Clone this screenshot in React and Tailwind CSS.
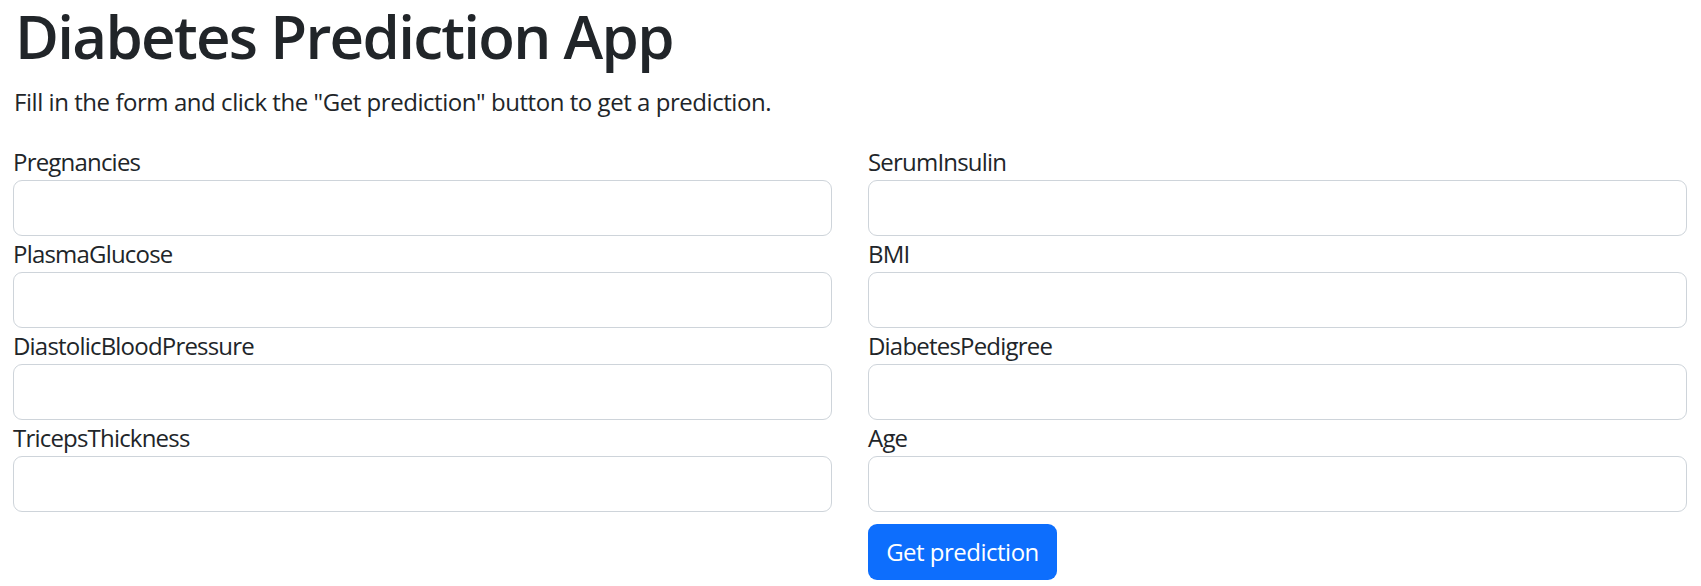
import React from 'react';

const leftFields = ['Pregnancies', 'PlasmaGlucose', 'DiastolicBloodPressure', 'TricepsThickness'];
const rightFields = ['SerumInsulin', 'BMI', 'DiabetesPedigree', 'Age'];

const Field = ({ name }) => (
    <div>
        <label htmlFor={name} className="block text-[24px] leading-[36px] tracking-[-0.8px]">{name}</label>
        <input
            id={name}
            type="text"
            className="block w-full h-[56px] px-[18px] bg-white border border-[#ced4da] rounded-[9px] outline-none"
        />
    </div>
);

const App = () => {
    return (
        <div className="min-h-screen bg-white text-[#212529] font-['Open_Sans','Noto_Sans',sans-serif] pl-[13px] pr-[14px]">
            <h1 className="text-[60px] leading-[72px] font-semibold tracking-[-1.7px] mb-[12px] pl-[2px]">Diabetes Prediction App</h1>
            <p className="text-[24px] leading-[36px] tracking-[-0.45px] mb-[24px] pl-[1px]">
                Fill in the form and click the "Get prediction" button to get a prediction.
            </p>

            <form className="grid grid-cols-2 gap-x-[36px]">
                <div className="flex flex-col">
                    {leftFields.map((f) => <Field key={f} name={f} />)}
                </div>
                <div className="flex flex-col items-start">
                    {rightFields.map((f) => (
                        <div key={f} className="w-full"><Field name={f} /></div>
                    ))}
                    <button
                        type="button"
                        className="mt-[12px] h-[56px] w-[189px] bg-[#0d6efd] text-white text-[24px] leading-[36px] tracking-[-0.5px] rounded-[9px]"
                    >
                        Get prediction
                    </button>
                </div>
            </form>
        </div>
    );
};

export default App;
